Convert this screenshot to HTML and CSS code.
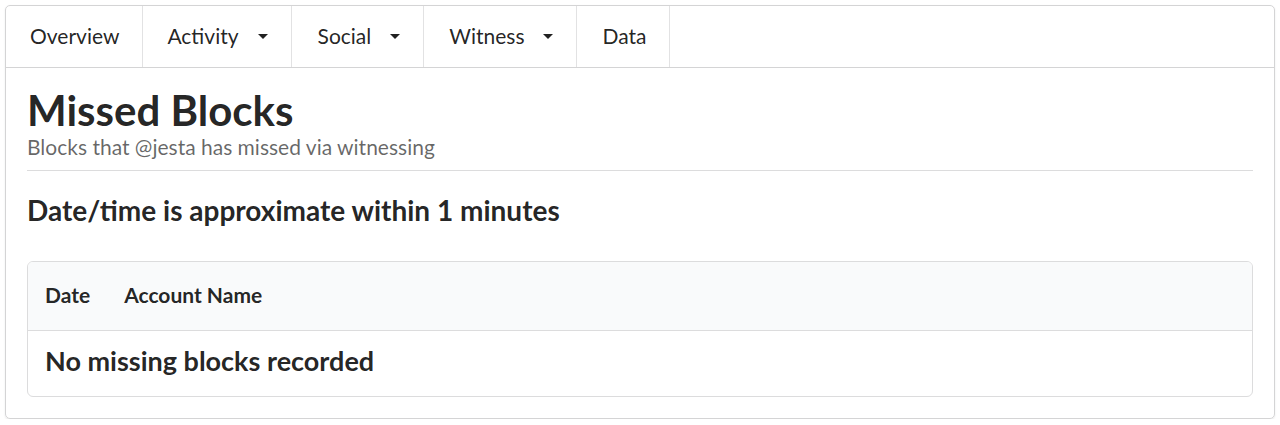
FILE: index.html
```html
<!DOCTYPE html>
<html>
<head>
<meta charset="utf-8">
<link rel="stylesheet" href="styles.css">
</head>
<body>
<div class="segment">
  <nav class="menu">
    <div class="item">Overview</div>
    <div class="item">Activity <span class="caret"></span></div>
    <div class="item">Social <span class="caret"></span></div>
    <div class="item">Witness <span class="caret"></span></div>
    <div class="item">Data</div>
  </nav>
  <div class="content">
    <div class="header">
      <h2 class="title">Missed Blocks</h2>
      <div class="sub">Blocks that @jesta has missed via witnessing</div>
    </div>
    <h3 class="note">Date/time is approximate within 1 minutes</h3>
    <div class="table">
      <div class="thead">
        <div class="th c-date">Date</div>
        <div class="th">Account Name</div>
      </div>
      <div class="tbody">
        <h3 class="empty">No missing blocks recorded</h3>
      </div>
    </div>
  </div>
</div>
</body>
</html>
```

FILE: styles.css
```css
html, body {
  margin: 0;
  padding: 0;
  background: #fff;
}
body {
  font-family: Lato, "Open Sans", sans-serif;
  color: rgba(0,0,0,0.87);
  padding: 5px 5px 0 5px;
}
.segment {
  border: 1px solid #d4d4d5;
  border-radius: 5px;
  height: 414px;
  box-sizing: border-box;
  box-shadow: 0 1px 2px rgba(34,36,38,0.1);
}
.menu {
  display: flex;
  border-bottom: 1px solid #d4d4d5;
  height: 62px;
  box-sizing: border-box;
}
.item {
  display: flex;
  align-items: center;
  padding: 0 23px 3px 24px;
  font-size: 21px;
  border-right: 1px solid #e2e2e3;
  gap: 19px;
}
.item:nth-child(3) { padding-left: 26px; }
.item:nth-child(4) { padding-left: 25px; }
.item:nth-child(5) { padding-left: 25px; }
.caret {
  width: 0;
  height: 0;
  border-left: 5px solid transparent;
  border-right: 5px solid transparent;
  border-top: 5px solid rgba(0,0,0,0.87);
  margin-top: 2px;
}
.content {
  padding: 18px 21px 0 21px;
}
.header {
  border-bottom: 1px solid #dcdcdd;
  padding-bottom: 10px;
}
.title {
  margin: 0;
  font-size: 42px;
  font-weight: 700;
  line-height: 48px;
}
.sub {
  font-size: 21px;
  color: rgba(0,0,0,0.6);
  line-height: 26px;
}
.note {
  margin: 22px 0 0 0;
  font-size: 28px;
  font-weight: 700;
  line-height: 34px;
}
.table {
  margin-top: 34px;
  border: 1px solid #dcdcdd;
  border-radius: 6px;
  overflow: hidden;
}
.thead {
  display: flex;
  align-items: center;
  background: #f9fafb;
  height: 69px;
  box-sizing: border-box;
  padding: 0 17px 3px 17px;
  gap: 34px;
  border-bottom: 1px solid #dcdcdd;
}
.th {
  font-size: 21px;
  font-weight: 700;
  white-space: nowrap;
}
.tbody {
  display: flex;
  align-items: center;
  height: 65px;
  box-sizing: border-box;
  padding: 0 17px 6px 17px;
}
.empty {
  margin: 0;
  font-size: 27px;
  font-weight: 700;
  line-height: 32px;
}
```
